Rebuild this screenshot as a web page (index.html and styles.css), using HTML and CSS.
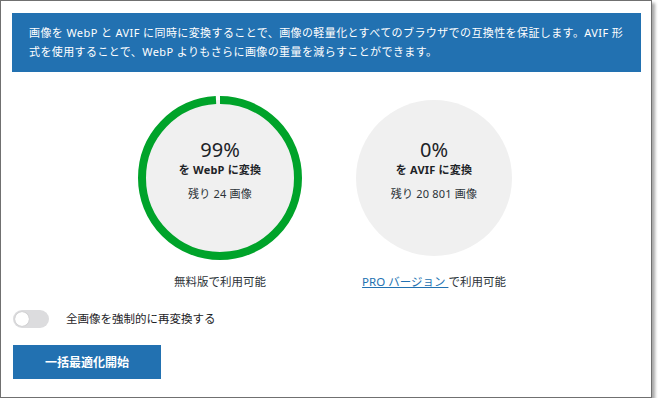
FILE: index.html
```html
<!DOCTYPE html>
<html lang="ja">
<head>
<meta charset="utf-8">
<title>WebP / AVIF 変換</title>
<link rel="stylesheet" href="styles.css">
</head>
<body>
<div class="frame">
  <div class="notice">画像を WebP と AVIF に同時に変換することで、画像の軽量化とすべてのブラウザでの互換性を保証します。AVIF 形式を使用することで、WebP よりもさらに画像の重量を減らすことができます。</div>

  <div class="stats">
    <div class="stat">
      <div class="circle">
        <svg class="ring" width="164" height="164" viewBox="0 0 164 164">
          <circle cx="82" cy="82" r="78" fill="#f0f0f0"/>
          <circle cx="82" cy="82" r="78" fill="none" stroke="#00a32a" stroke-width="8" stroke-dasharray="485.19 4.91" transform="rotate(-90 82 82)"/>
        </svg>
        <div class="percent">99%</div>
        <div class="target">を WebP に変換</div>
        <div class="left">残り 24 画像</div>
      </div>
      <div class="avail">無料版で利用可能</div>
    </div>
    <div class="stat">
      <div class="circle">
        <svg class="ring" width="164" height="164" viewBox="0 0 164 164">
          <circle cx="82" cy="82" r="78" fill="#f0f0f0"/>
        </svg>
        <div class="percent">0%</div>
        <div class="target">を AVIF に変換</div>
        <div class="left">残り 20 801 画像</div>
      </div>
      <div class="avail"><a class="link" href="#">PRO バージョン </a>で利用可能</div>
    </div>
  </div>

  <div class="toggle-row">
    <span class="toggle"><span class="knob"></span></span>
    <span class="toggle-label">全画像を強制的に再変換する</span>
  </div>

  <button class="start">一括最適化開始</button>
</div>
</body>
</html>
```

FILE: styles.css
```css
html, body {
  margin: 0;
  padding: 0;
  background: #ffffff;
}

body {
  font-family: "Noto Sans", "Noto Sans CJK JP", sans-serif;
  color: #1d2327;
}

.frame {
  box-sizing: border-box;
  width: 652px;
  height: 398px;
  border: 1px solid #707070;
  box-shadow: 3px 3px 3px rgba(0, 0, 0, 0.35);
  padding: 12px 10px 0 11px;
  background: #ffffff;
}

.notice {
  background: #2271b1;
  color: #ffffff;
  font-size: 11px;
  line-height: 19px;
  letter-spacing: 0.4px;
  padding: 10px 17px 11px 17px;
}

.stats {
  display: flex;
  justify-content: center;
  gap: 50px;
  margin-top: 24px;
  padding-left: 1px;
}

.stat {
  width: 164px;
  display: flex;
  flex-direction: column;
  align-items: center;
}

.circle {
  position: relative;
  width: 164px;
  height: 164px;
  box-sizing: border-box;
  padding-top: 41px;
  display: flex;
  flex-direction: column;
  align-items: center;
}

.ring {
  position: absolute;
  left: 0;
  top: 0;
}

.percent,
.target,
.left {
  position: relative;
}

.percent {
  font-size: 20px;
  line-height: 25px;
  color: #1d2327;
}

.target {
  font-size: 11px;
  font-weight: bold;
  line-height: 16px;
  letter-spacing: 0.2px;
  color: #1d2327;
}

.left {
  font-size: 11px;
  line-height: 16px;
  margin-top: 8px;
  letter-spacing: 0.2px;
  color: #2c3338;
}

.avail {
  margin-top: 14px;
  font-size: 11.5px;
  line-height: 16px;
  color: #2c3338;
  white-space: nowrap;
}

.link {
  color: #2271b1;
  text-decoration: underline;
}

.toggle-row {
  display: flex;
  align-items: center;
  gap: 17px;
  margin-top: 20px;
  padding-left: 1px;
}

.toggle {
  position: relative;
  width: 36px;
  height: 18px;
  border-radius: 9px;
  background: #dcdcde;
  display: inline-flex;
  align-items: center;
  padding-left: 2px;
  box-sizing: border-box;
}

.knob {
  width: 14px;
  height: 14px;
  border-radius: 50%;
  background: #ffffff;
  box-shadow: 0 0 1px rgba(0, 0, 0, 0.3);
}

.toggle-label {
  font-size: 11.5px;
  line-height: 16px;
  color: #1d2327;
}

.start {
  display: block;
  margin-top: 17px;
  margin-left: 1px;
  width: 148px;
  height: 34px;
  border: none;
  border-radius: 0;
  background: #2271b1;
  color: #ffffff;
  font-family: "Noto Sans", "Noto Sans CJK JP", sans-serif;
  font-size: 12px;
  font-weight: bold;
  padding: 0;
}
```
